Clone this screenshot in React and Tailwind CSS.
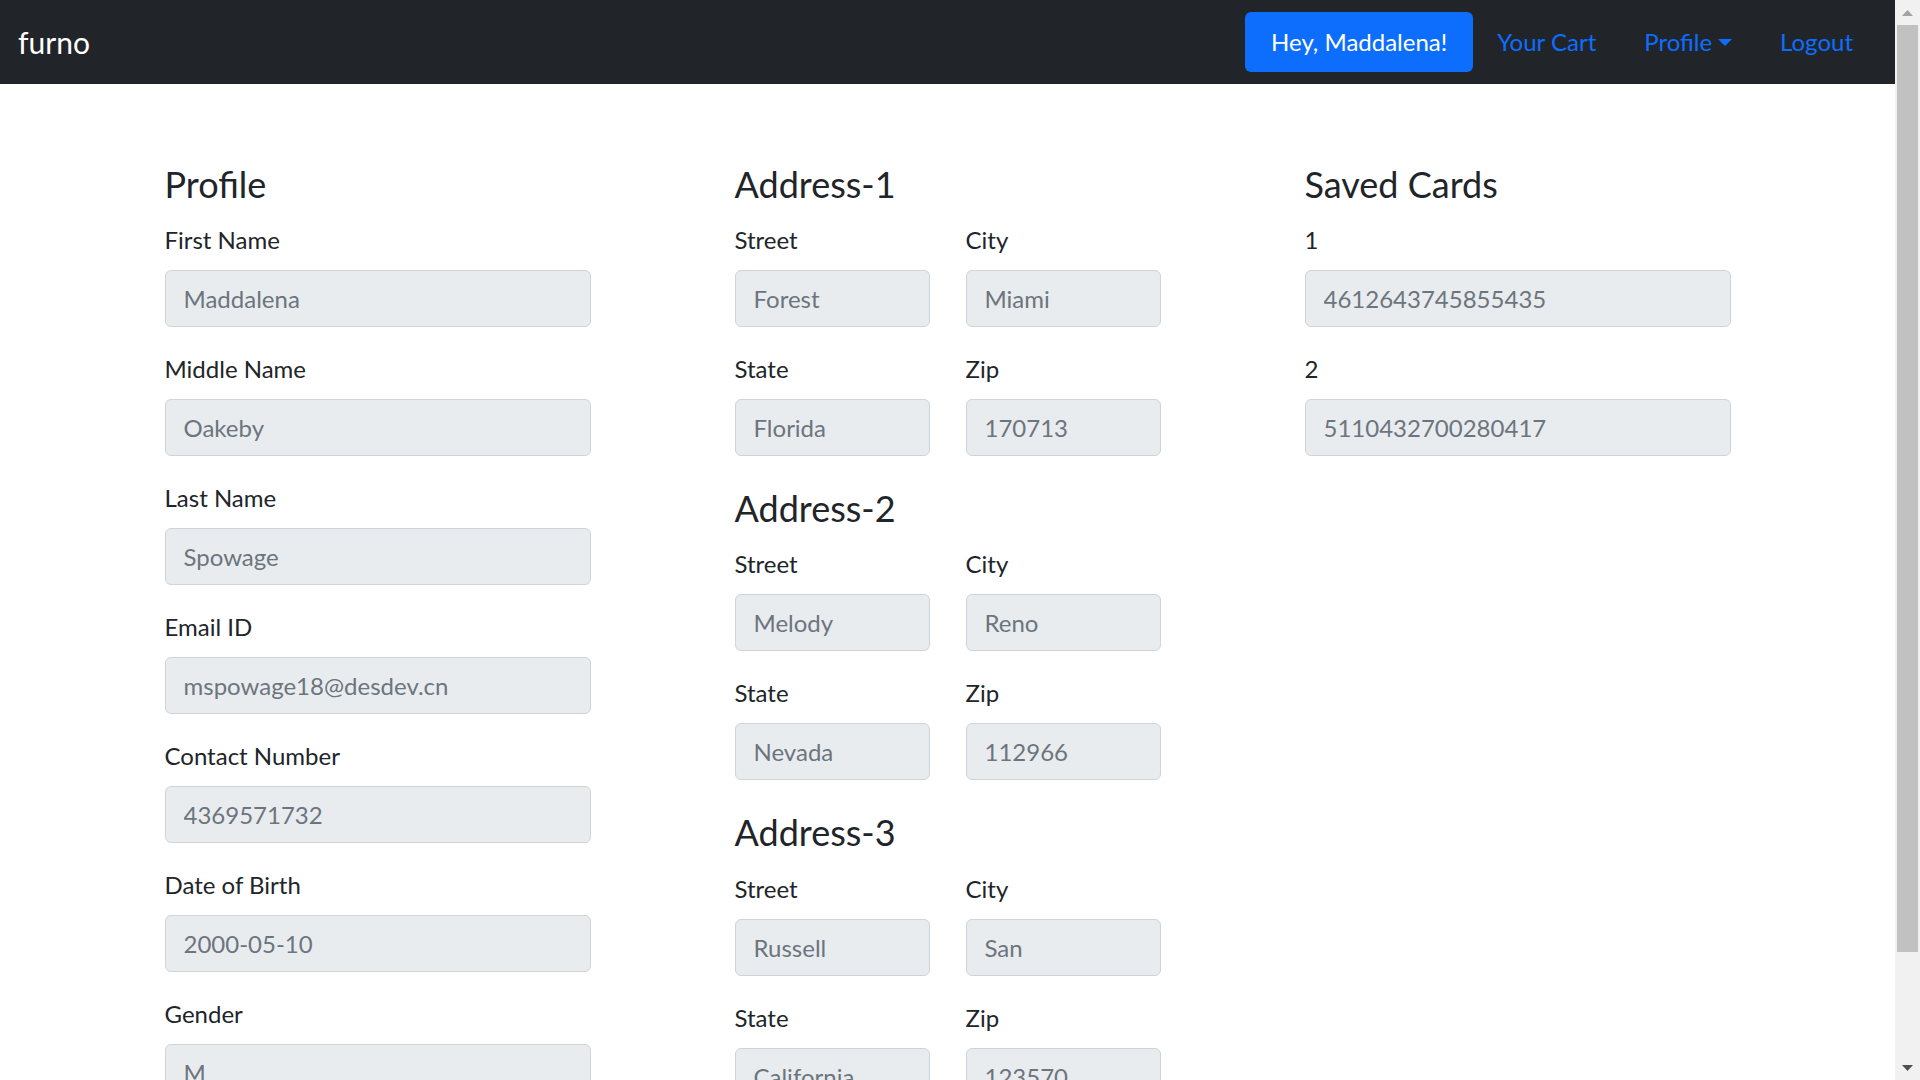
import React from 'react';

const profileFields = [
  { label: 'First Name', value: 'Maddalena' },
  { label: 'Middle Name', value: 'Oakeby' },
  { label: 'Last Name', value: 'Spowage' },
  { label: 'Email ID', value: 'mspowage18@desdev.cn' },
  { label: 'Contact Number', value: '4369571732' },
  { label: 'Date of Birth', value: '2000-05-10' },
  { label: 'Gender', value: 'M' },
];

const addresses = [
  { street: 'Forest', city: 'Miami', state: 'Florida', zip: '170713' },
  { street: 'Melody', city: 'Reno', state: 'Nevada', zip: '112966' },
  { street: 'Russell', city: 'San', state: 'California', zip: '123570' },
];

const cards = ['4612643745855435', '5110432700280417'];

function Field({ label, value }) {
  return (
    <div className="mb-[24px]">
      <label className="block text-[24px] leading-[36px] mb-[12px] text-[#212529]">{label}</label>
      <input
        disabled
        placeholder={value}
        className="block w-full h-[57px] px-[18px] text-[24px] bg-[#e9ecef] border border-[#ced4da] rounded-[6px] placeholder:text-[#6c757d] outline-none"
      />
    </div>
  );
}

function Heading({ children }) {
  return (
    <h3 className="text-[36px] leading-[1.2] mb-[16px] font-normal text-[#212529]">{children}</h3>
  );
}

export default function App() {
  return (
    <div className="flex h-screen overflow-hidden bg-white" style={{ fontFamily: 'Lato, "Open Sans", sans-serif' }}>
      <div className="flex-1 min-w-0 overflow-hidden">
        <nav className="h-[84px] bg-[#212529] flex items-center justify-between px-[18px]">
          <span className="text-[30px] text-white">furno</span>
          <div className="flex items-center text-[24px]">
            <button className="h-[60px] px-[26px] bg-[#0d6efd] text-white rounded-[6px]">Hey, Maddalena!</button>
            <a className="px-[24px] text-[#0d6efd]">Your Cart</a>
            <a className="px-[24px] text-[#0d6efd] flex items-center">
              Profile
              <span className="ml-[6px] w-0 h-0 border-t-[7px] border-t-[#0d6efd] border-x-[7px] border-x-transparent" />
            </a>
            <a className="px-[24px] text-[#0d6efd]">Logout</a>
          </div>
        </nav>

        <div className="w-[1710px] mx-auto grid grid-cols-3 pt-[79px]">
          <div className="px-[72px]">
            <Heading>Profile</Heading>
            {profileFields.map((f) => (
              <Field key={f.label} label={f.label} value={f.value} />
            ))}
          </div>

          <div className="px-[72px]">
            {addresses.map((a, i) => (
              <div key={i} className={i > 0 ? 'mt-[7px]' : ''}>
                <Heading>Address-{i + 1}</Heading>
                <div className="grid grid-cols-2 gap-x-[36px]">
                  <Field label="Street" value={a.street} />
                  <Field label="City" value={a.city} />
                  <Field label="State" value={a.state} />
                  <Field label="Zip" value={a.zip} />
                </div>
              </div>
            ))}
          </div>

          <div className="px-[72px]">
            <Heading>Saved Cards</Heading>
            {cards.map((c, i) => (
              <Field key={c} label={String(i + 1)} value={c} />
            ))}
          </div>
        </div>
      </div>

      <div className="w-[25px] h-full bg-[#f1f1f1] flex flex-col">
        <div className="h-[25px] flex items-center justify-center">
          <svg width="11" height="6" viewBox="0 0 11 6"><path d="M5.5 0 L11 6 L0 6 Z" fill="#a3a3a3" /></svg>
        </div>
        <div className="flex-1 px-[2px]">
          <div className="h-[927px] bg-[#c1c1c1]" />
        </div>
        <div className="h-[25px] flex items-center justify-center">
          <svg width="11" height="6" viewBox="0 0 11 6"><path d="M0 0 L11 0 L5.5 6 Z" fill="#505050" /></svg>
        </div>
      </div>
    </div>
  );
}
